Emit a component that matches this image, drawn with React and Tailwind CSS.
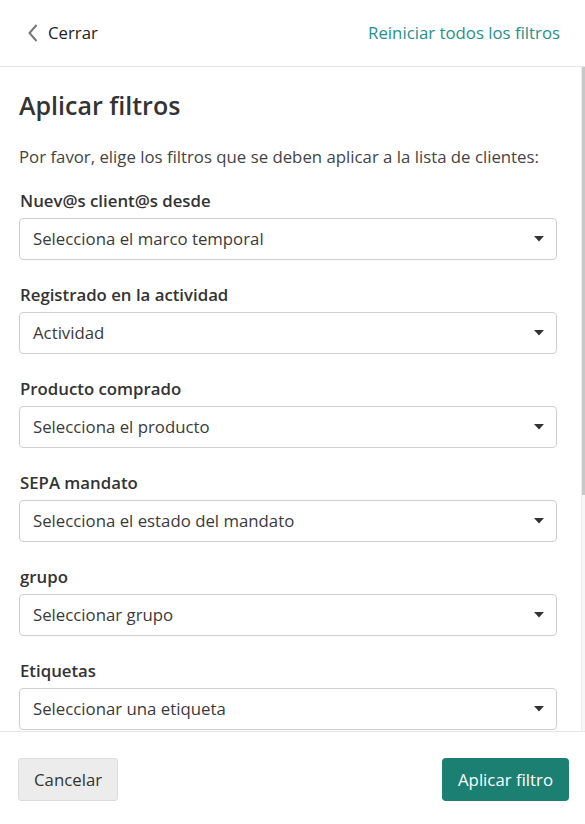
import React from 'react';

const filters = [
  { label: 'Nuev@s client@s desde', placeholder: 'Selecciona el marco temporal' },
  { label: 'Registrado en la actividad', placeholder: 'Actividad' },
  { label: 'Producto comprado', placeholder: 'Selecciona el producto' },
  { label: 'SEPA mandato', placeholder: 'Selecciona el estado del mandato' },
  { label: 'grupo', placeholder: 'Seleccionar grupo' },
  { label: 'Etiquetas', placeholder: 'Seleccionar una etiqueta' },
];

const SelectBox = ({ placeholder }) => (
  <div className="flex items-center justify-between h-[42px] rounded-[4px] border border-[#cfcfcf] bg-white pl-[13px] pr-[12px]">
    <span className="text-[16.8px] text-[#3a3a3a]">{placeholder}</span>
    <svg width="10" height="6" viewBox="0 0 10 6" className="text-[#333]">
      <path d="M0 0 L10 0 L5 5.5 Z" fill="currentColor" />
    </svg>
  </div>
);

export default function App() {
  return (
    <div className="w-[585px] h-[824px] flex flex-col bg-white font-['Open_Sans',sans-serif] text-[#333]">
      {/* Header */}
      <div className="h-[67px] shrink-0 flex items-center justify-between border-b border-[#e6e6e6] pl-[28px] pr-[25px]">
        <button className="flex items-center gap-[10px] text-[16.8px] text-[#222]">
          <svg width="10" height="18" viewBox="0 0 10 18" className="text-[#777]">
            <path d="M8.5 1 L1.5 9 L8.5 17" fill="none" stroke="currentColor" strokeWidth="2" />
          </svg>
          Cerrar
        </button>
        <button className="text-[16.8px] text-[#27908b]">Reiniciar todos los filtros</button>
      </div>

      {/* Scrollable content */}
      <div className="relative flex-1 overflow-hidden">
        <div className="px-[19px] pr-[28px] pt-[22px]">
          <h2 className="text-[25px] leading-[32px] font-semibold text-[#333]">Aplicar filtros</h2>
          <p className="mt-[24px] text-[16.8px] leading-[24px] text-[#444]">
            Por favor, elige los filtros que se deben aplicar a la lista de clientes:
          </p>
          <div className="mt-[21px] flex flex-col gap-[24px]">
            {filters.map((f) => (
              <div key={f.label} className="flex flex-col gap-[6px]">
                <label className="text-[16.8px] leading-[22px] font-semibold text-[#333] pl-[1px]">{f.label}</label>
                <SelectBox placeholder={f.placeholder} />
              </div>
            ))}
          </div>
        </div>
        <div className="absolute right-0 top-0 bottom-0 w-[4px] border-l border-[#ececec] bg-[#f7f7f7]">
          <div className="h-[428px] w-full bg-[#c8c8c8]" />
        </div>
      </div>

      {/* Footer */}
      <div className="h-[93px] shrink-0 flex items-start justify-between border-t border-[#e6e6e6] pl-[18px] pr-[16px] pt-[26px]">
        <button className="h-[43px] px-[15px] rounded-[3px] border border-[#dcdcdc] bg-[#ececec] text-[16.8px] text-[#333]">
          Cancelar
        </button>
        <button className="h-[43px] px-[16px] rounded-[4px] bg-[#1b7f72] text-[16.8px] text-white">
          Aplicar filtro
        </button>
      </div>
    </div>
  );
}
